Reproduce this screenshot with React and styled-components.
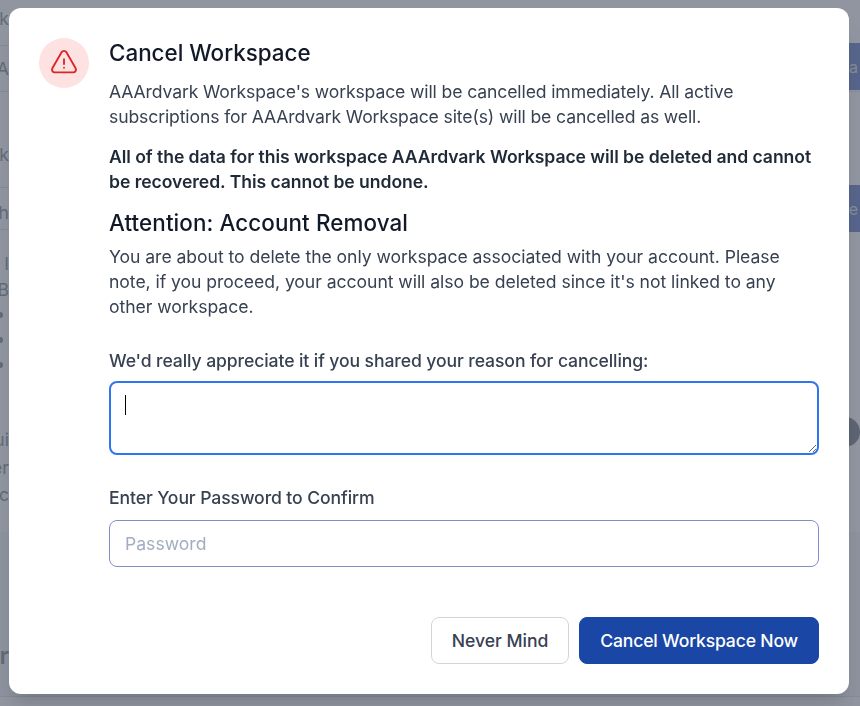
import React from 'react';
import styled, { createGlobalStyle } from 'styled-components';

const GlobalStyle = createGlobalStyle`
  html, body {
    margin: 0;
    height: 100%;
    overflow: hidden;
    background: #fff;
    font-family: Inter, "Liberation Sans", sans-serif;
  }
  * { box-sizing: border-box; }
`;

// page that sits dimmed behind the dialog
const Page = styled.div`
  width: 860px;
  height: 706px;
  overflow: hidden;
  display: flex;
  flex-direction: column;
  color: #4b5563;
  font-size: 17.6px;
`;

const PageRow = styled.div`
  display: flex;
  align-items: ${props => props.align || 'center'};
  justify-content: space-between;
  height: ${props => props.height}px;
  flex: none;
  padding-bottom: ${props => props.pad || 0}px;
  background: ${props => props.bg || 'transparent'};
  border-bottom: ${props => (props.line ? '1px solid #d1d5db' : '0')};
`;

const ClippedText = styled.div`
  width: 9px;
  margin-top: ${props => props.shift || 0}px;
  display: flex;
  justify-content: flex-end;
  overflow: hidden;
  white-space: nowrap;
  font-size: ${props => props.size || 17.6}px;
  font-weight: ${props => props.weight || 400};
`;

const Bullet = styled.span`
  display: block;
  width: 6px;
  height: 6px;
  border-radius: 50%;
  margin-left: -3px;
  background: #4b5563;
`;

const PageButton = styled.div`
  width: 120px;
  height: 47px;
  flex: none;
  margin-bottom: ${props => props.lift || 0}px;
  padding-right: 2px;
  background: #1e40af;
  color: #d1d5db;
  font-size: 16px;
  display: flex;
  align-items: center;
  justify-content: flex-end;
  overflow: hidden;
`;

const PageRound = styled.div`
  width: 30px;
  height: 30px;
  flex: none;
  margin-bottom: 16px;
  border-radius: 50%;
  background: #374151;
`;

const Overlay = styled.div`
  position: fixed;
  inset: 0;
  background: rgba(107, 114, 128, 0.75);
  display: flex;
  align-items: flex-start;
  justify-content: center;
  padding: 8px 11px 12px 9px;
`;

const Dialog = styled.div`
  width: 840px;
  height: 686px;
  padding: 30px;
  display: flex;
  gap: 20px;
  background: #fff;
  border-radius: 12px;
  box-shadow: 0 20px 25px -5px rgba(0, 0, 0, 0.1), 0 8px 10px -6px rgba(0, 0, 0, 0.1);
`;

const IconCircle = styled.div`
  width: 50px;
  height: 50px;
  flex: none;
  border-radius: 50%;
  background: #fee2e2;
  color: #dc2626;
  display: flex;
  align-items: center;
  justify-content: center;
`;

const Content = styled.div`
  flex: 1;
  min-width: 0;
  display: flex;
  flex-direction: column;
`;

const Title = styled.h3`
  margin: ${props => props.top || 0}px 0 0;
  font-size: 22.4px;
  line-height: 30px;
  font-weight: 500;
  letter-spacing: ${props => props.spacing || 0}px;
  color: #111827;
`;

const Body = styled.p`
  margin: ${props => props.top || 0}px 0 0;
  font-size: 17.6px;
  line-height: 25px;
  font-weight: ${props => (props.bold ? 600 : 400)};
  letter-spacing: ${props => props.spacing || 0}px;
  color: ${props => (props.bold ? '#1f2937' : '#374151')};
`;

const Label = styled.label`
  display: block;
  margin-top: ${props => props.top}px;
  font-size: 17.6px;
  line-height: 24px;
  font-weight: 500;
  letter-spacing: -0.1px;
  color: #374151;
`;

const ReasonWrap = styled.div`
  position: relative;
  display: flex;
  margin-top: 8px;
`;

const Reason = styled.textarea`
  width: 100%;
  height: 74px;
  padding: 12px 14px;
  border: 2px solid #2f74f0;
  border-radius: 8px;
  outline: 0;
  background: #fff;
  font: inherit;
`;

const Caret = styled.span`
  position: absolute;
  left: 16px;
  top: 14px;
  width: 1px;
  height: 20px;
  background: #000;
`;

const Password = styled.input`
  display: block;
  width: 100%;
  height: 47px;
  margin-top: 10px;
  padding: 0 15px;
  border: 1px solid #7f91c4;
  border-radius: 8px;
  outline: 0;
  font-family: inherit;
  font-size: 17.6px;
  &::placeholder {
    color: #a0aec0;
    opacity: 1;
  }
`;

const Actions = styled.div`
  display: flex;
  justify-content: flex-end;
  gap: 10px;
  margin-top: 50px;
`;

const Button = styled.button`
  height: 47px;
  padding: 0 20px;
  border-radius: 8px;
  font-family: inherit;
  font-size: 17.6px;
  font-weight: 500;
  letter-spacing: ${props => (props.primary ? -0.18 : -0.03)}px;
  color: ${props => (props.primary ? '#fff' : '#374151')};
  background: ${props => (props.primary ? '#1a46a5' : '#fff')};
  border: 1px solid ${props => (props.primary ? '#1a46a5' : '#d1d5db')};
`;

const WarningIcon = () => (
  <svg width="30" height="30" viewBox="0 0 24 24" fill="none" stroke="currentColor" strokeWidth="1.5" strokeLinecap="round" strokeLinejoin="round">
    <path d="M12 9v3.75m-9.303 3.376c-.866 1.5.217 3.374 1.948 3.374h14.71c1.73 0 2.813-1.874 1.948-3.374L13.949 3.378c-.866-1.5-3.032-1.5-3.898 0L2.697 16.126zM12 15.75h.007v.008H12v-.008z" />
  </svg>
);

const BackgroundPage = () => (
  <Page>
    <PageRow height={46} line pad={8}><ClippedText>k</ClippedText></PageRow>
    <PageRow height={46} line><ClippedText>AA</ClippedText><PageButton lift={4}>da</PageButton></PageRow>
    <PageRow height={96} line align="flex-end" pad={22}><ClippedText>k</ClippedText></PageRow>
    <PageRow height={42} line><ClippedText shift={8}>ch</ClippedText><PageButton>ve</PageButton></PageRow>
    <PageRow height={20} />
    <PageRow height={26}><ClippedText>- I</ClippedText></PageRow>
    <PageRow height={26}><ClippedText>B</ClippedText></PageRow>
    <PageRow height={25}><Bullet /></PageRow>
    <PageRow height={25}><Bullet /></PageRow>
    <PageRow height={25}><Bullet /></PageRow>
    <PageRow height={50} />
    <PageRow height={25}><ClippedText>ui</ClippedText><PageRound /></PageRow>
    <PageRow height={30}><ClippedText>er</ClippedText></PageRow>
    <PageRow height={25}><ClippedText>c</ClippedText></PageRow>
    <PageRow height={25} />
    <PageRow height={165} bg="#f3f4f6" line align="flex-end" pad={26}>
      <ClippedText size={24} weight={600}>r</ClippedText>
    </PageRow>
  </Page>
);

const App = () => (
  <>
    <GlobalStyle />
    <BackgroundPage />
    <Overlay>
      <Dialog>
        <IconCircle><WarningIcon /></IconCircle>
        <Content>
          <Title>Cancel Workspace</Title>
          <Body top={11} spacing={-0.125}>
            AAArdvark Workspace's workspace will be cancelled immediately. All active subscriptions for AAArdvark Workspace site(s) will be cancelled as well.
          </Body>
          <Body bold top={15} spacing={-0.06}>
            All of the data for this workspace AAArdvark Workspace will be deleted and cannot be recovered. This cannot be undone.
          </Body>
          <Title top={14} spacing={0.1}>Attention: Account Removal</Title>
          <Body top={6} spacing={-0.05}>
            You are about to delete the only workspace associated with your account. Please note, if you proceed, your account will also be deleted since it's not linked to any other workspace.
          </Body>
          <Label top={30}>We'd really appreciate it if you shared your reason for cancelling:</Label>
          <ReasonWrap>
            <Reason />
            <Caret />
          </ReasonWrap>
          <Label top={31}>Enter Your Password to Confirm</Label>
          <Password type="password" placeholder="Password" />
          <Actions>
            <Button>Never Mind</Button>
            <Button primary>Cancel Workspace Now</Button>
          </Actions>
        </Content>
      </Dialog>
    </Overlay>
  </>
);

export default App;
